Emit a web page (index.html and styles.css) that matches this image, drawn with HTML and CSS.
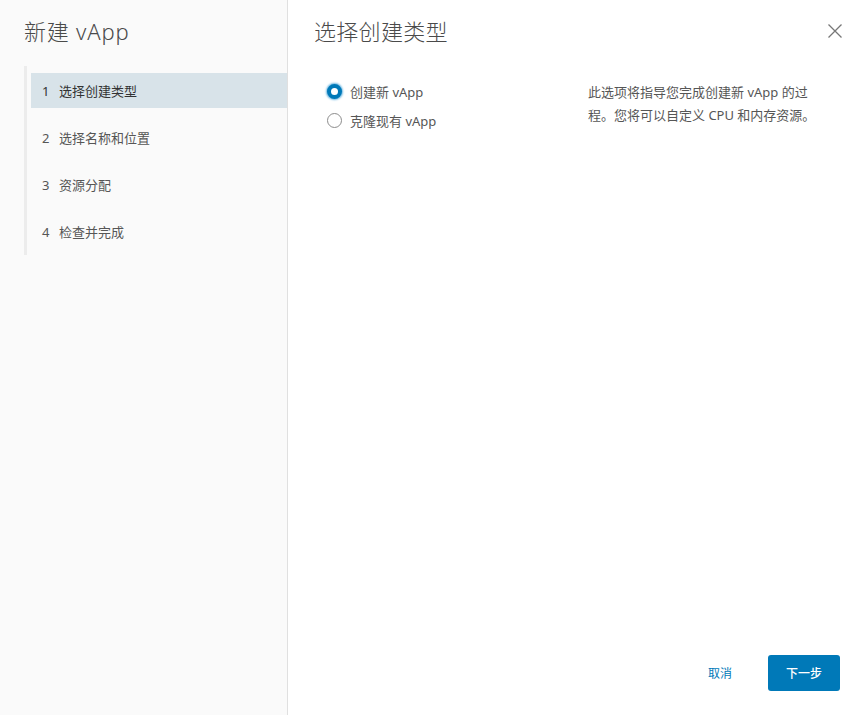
FILE: index.html
```html
<!DOCTYPE html>
<html lang="zh">
<head>
<meta charset="utf-8">
<link rel="stylesheet" href="styles.css">
</head>
<body>
<div class="wizard">
  <aside class="sidebar">
    <h1 class="wiz-title">新建 vApp</h1>
    <ul class="steps">
      <li class="step active"><span class="num">1</span>选择创建类型</li>
      <li class="step"><span class="num">2</span>选择名称和位置</li>
      <li class="step"><span class="num">3</span>资源分配</li>
      <li class="step"><span class="num">4</span>检查并完成</li>
    </ul>
  </aside>
  <main class="main">
    <header class="main-head">
      <h2 class="page-title">选择创建类型</h2>
      <button class="close" aria-label="关闭">
        <svg width="16" height="16" viewBox="0 0 16 16"><path d="M1.5 1.5L14.5 14.5M14.5 1.5L1.5 14.5" stroke="#777" stroke-width="1.3" fill="none"/></svg>
      </button>
    </header>
    <section class="content">
      <div class="options">
        <label class="opt"><span class="radio checked"></span>创建新 vApp</label>
        <label class="opt"><span class="radio"></span>克隆现有 vApp</label>
      </div>
      <p class="desc">此选项将指导您完成创建新 vApp 的过程。您将可以自定义 CPU 和内存资源。</p>
    </section>
    <footer class="foot">
      <button class="btn-link">取消</button>
      <button class="btn-primary">下一步</button>
    </footer>
  </main>
</div>
</body>
</html>
```
FILE: styles.css
```css
* { box-sizing: border-box; }
html, body { margin: 0; padding: 0; }
body {
  width: 863px;
  height: 715px;
  background: #fff;
  font-family: "Noto Sans", "Noto Sans CJK SC", sans-serif;
  color: #565656;
  overflow: hidden;
}
.wizard { display: flex; height: 715px; }
.sidebar {
  width: 288px;
  flex: none;
  background: #fafafa;
  border-right: 1px solid #e0e0e0;
  padding: 17px 0 0 24px;
}
.wiz-title {
  margin: 0;
  font-size: 22px;
  font-weight: 300;
  color: #4a4a4a;
  line-height: 28px;
  letter-spacing: 0.8px;
}
.steps {
  list-style: none;
  margin: 21px 0 0 0;
  padding: 7px 0 6px 4px;
  border-left: 3px solid #ececec;
}
.step {
  height: 35px;
  margin-bottom: 12px;
  display: flex;
  align-items: center;
  padding-left: 11px;
  font-size: 13px;
  color: #565656;
}
.step:last-child { margin-bottom: 0; }
.step.active { background: #d8e3e9; color: #333; }
.num { width: 17px; }
.main {
  flex: 1;
  display: flex;
  flex-direction: column;
  padding: 17px 20px 24px 26px;
}
.main-head { display: flex; justify-content: space-between; align-items: center; }
.page-title {
  margin: 0;
  font-size: 22px;
  font-weight: 300;
  color: #4a4a4a;
  line-height: 28px;
  letter-spacing: 0.3px;
}
.close {
  border: 0;
  background: none;
  padding: 0;
  width: 16px;
  height: 16px;
  display: flex;
}
.content {
  display: flex;
  margin-top: 36px;
  flex: 1;
}
.options {
  width: 274px;
  flex: none;
  padding-left: 13px;
  display: flex;
  flex-direction: column;
  gap: 9px;
}
.opt {
  display: flex;
  align-items: center;
  font-size: 13px;
  color: #565656;
  height: 20px;
  gap: 8px;
}
.radio {
  width: 15px;
  height: 15px;
  border-radius: 50%;
  border: 1px solid #8c8c8c;
  background: #fff;
  flex: none;
}
.radio.checked {
  border: 4.5px solid #0079b8;
  background: #fff;
  box-shadow: 0 0 2px 1px #6ab5e0;
}
.desc {
  margin: 0;
  width: 230px;
  font-size: 13px;
  line-height: 23px;
  color: #565656;
}
.foot {
  display: flex;
  justify-content: flex-end;
  align-items: center;
  gap: 36px;
  padding-right: 3px;
}
.btn-link {
  border: 0;
  background: none;
  color: #0079b8;
  font-family: inherit;
  font-size: 12px;
  padding: 0;
}
.btn-primary {
  width: 72px;
  height: 36px;
  border: 0;
  border-radius: 3px;
  background: #0079b8;
  color: #fff;
  font-family: inherit;
  font-size: 12px;
  font-weight: 500;
}
```
